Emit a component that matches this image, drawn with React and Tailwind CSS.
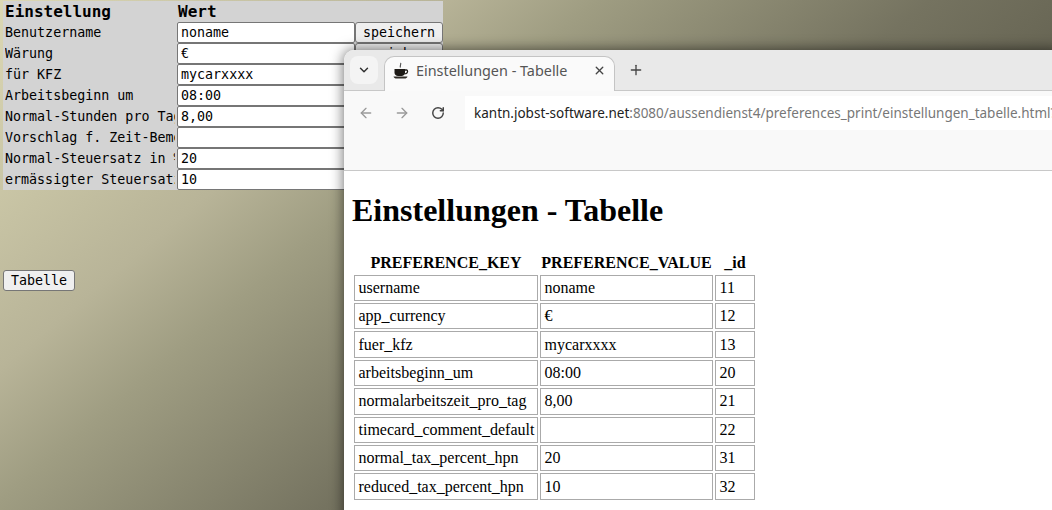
import { ArrowLeft, ArrowRight, ChevronDown, Plus, RotateCw, X } from "lucide-react";

const settings = [
	{ label: "Benutzername", value: "noname" },
	{ label: "Wärung", value: "€" },
	{ label: "für KFZ", value: "mycarxxxx" },
	{ label: "Arbeitsbeginn um", value: "08:00" },
	{ label: "Normal-Stunden pro Tag", value: "8,00" },
	{ label: "Vorschlag f. Zeit-Bemerkung", value: "" },
	{ label: "Normal-Steuersatz in %", value: "20" },
	{ label: "ermässigter Steuersatz in %", value: "10" },
];

const rows = [
	["username", "noname", 11],
	["app_currency", "€", 12],
	["fuer_kfz", "mycarxxxx", 13],
	["arbeitsbeginn_um", "08:00", 20],
	["normalarbeitszeit_pro_tag", "8,00", 21],
	["timecard_comment_default", "", 22],
	["normal_tax_percent_hpn", "20", 31],
	["reduced_tax_percent_hpn", "10", 32],
];

const CoffeeIcon = () => (
	<svg width="16" height="18" viewBox="0 0 16 18" className="shrink-0">
		<path d="M7.500 1c1 1.200-1 2.500 0 4.500" fill="none" stroke="#555" strokeWidth="1.200" />
		<path d="M1.500 7h10.500v3.500c0 2-1.500 3.500-3.500 3.500h-3.500c-2 0-3.500-1.500-3.500-3.500z" fill="#1c1915" />
		<path d="M12 8h1.500c1.500 0 1.500 3-.5 3.500l-1.500.5" fill="none" stroke="#1c1915" strokeWidth="1.300" />
		<path d="M.5 14.500h14c-.5 1.500-1.500 2-3 2h-8c-1.500 0-2.500-.5-3-2z" fill="#2e2a25" />
	</svg>
);

const BrowserWindow = () => (
	<div className="absolute left-[344px] top-[50px] h-[480px] w-[720px] overflow-hidden rounded-t-[10px] bg-white shadow-[0_0_14px_rgba(0,0,0,0.6)]">
		{/* Tab strip */}
		<div className="flex h-[40px] items-start bg-[#e9e9e9] pt-[6px] pl-[6px]">
			<div className="flex h-[28px] w-[28px] items-center justify-center rounded-lg bg-[#f4f4f4] text-[#333]">
				<ChevronDown size={14} strokeWidth={2.5} />
			</div>
			<div className="relative z-10 ml-[6px] flex h-[35px] w-[231px] items-center rounded-t-[10px] border border-b-0 border-[#c4c4c4] bg-[#fafafa] pb-[7px] pl-[8px] pr-[8px]">
				<CoffeeIcon />
				<span className="ml-[7px] flex-1 font-['Noto_Sans'] text-[14.4px] leading-[20px] whitespace-nowrap text-[#555]">Einstellungen - Tabelle</span>
				<X size={13} strokeWidth={2.5} className="text-[#444]" />
			</div>
			<Plus size={16} strokeWidth={2} className="ml-[13px] mt-[6px] text-[#444]" />
		</div>
		{/* Toolbar */}
		<div className="h-[81px] border-y border-[#c8c8c8] bg-[#f9f9f9]">
			<div className="flex h-[46px] items-start">
				<div className="mt-[5px] flex h-[34px] w-[121px] shrink-0 items-center pl-[14px]">
					<ArrowLeft size={16} className="text-[#9a9a9a]" />
					<ArrowRight size={16} className="ml-[20px] text-[#9a9a9a]" />
					<RotateCw size={14} strokeWidth={2.5} className="ml-[21px] text-[#444]" />
				</div>
				<div className="mt-[5px] flex h-[34px] flex-1 items-center overflow-hidden whitespace-nowrap bg-white pl-[9px] font-['Noto_Sans'] text-[13.5px]">
					<span className="text-[#222]">kantn.jobst-software.net</span>
					<span className="text-[#777]">:8080/aussendienst4/preferences_print/einstellungen_tabelle.html?</span>
				</div>
			</div>
		</div>
		{/* Page */}
		<div className="pl-[8px] font-['Liberation_Serif'] text-[16px] text-black">
			<h1 className="mt-[21px] mb-[21.7px] text-[32px] leading-[37px] font-bold">Einstellungen - Tabelle</h1>
			<table className="border-separate border-spacing-[2px]">
				<thead>
					<tr>
						<th className="h-[20px] w-[184px] p-0 leading-[20px]">PREFERENCE_KEY</th>
						<th className="h-[20px] w-[173px] p-0 leading-[20px]">PREFERENCE_VALUE</th>
						<th className="h-[20px] w-[40px] p-0 leading-[20px]">_id</th>
					</tr>
				</thead>
				<tbody>
					{rows.map((row) => (
						<tr key={row[2]}>
							{row.map((cell, i) => (
								<td key={i} className="h-[26.4px] border border-[#aaa] pl-[3.500px] pr-[2px] py-0">
									{cell}
								</td>
							))}
						</tr>
					))}
				</tbody>
			</table>
		</div>
	</div>
);

const App = () => {
	return (
		<div className="relative h-[510px] w-[1052px] overflow-hidden bg-[linear-gradient(140deg,#dcd8b4_0%,#b8b498_26.5%,#9f9d82_36%,#757360_56%,#6c6a58_63.4%,#403e30_100%)] pt-px pl-[3px] font-['DejaVu_Sans_Mono'] text-[13.33px] text-black">
			<div className="grid w-[440px] grid-cols-[174px_178px_88px] bg-[#d3d3d3]">
				<div className="h-[21px] pl-[2px] text-[16px] leading-[21px] font-bold">Einstellung</div>
				<div className="col-span-2 h-[21px] pl-px text-[16px] leading-[21px] font-bold">Wert</div>
				{settings.map((s) => (
					<div key={s.label} className="contents">
						<div className="pl-[2px]">
							<div className="h-[21px] w-[170px] overflow-hidden leading-[21px] whitespace-nowrap">{s.label}</div>
						</div>
						<input
							readOnly
							value={s.value}
							className="h-[21px] w-[178px] rounded-[2px] border border-[#767676] bg-white px-[3px] font-['DejaVu_Sans_Mono'] text-[13.33px] text-black"
						/>
						<button className="h-[21px] rounded-[3px] border border-[#767676] bg-[#efefef] text-center text-[13.33px]">speichern</button>
					</div>
				))}
			</div>
			<button className="mt-[80px] block h-[21px] w-[72px] rounded-[3px] border border-[#767676] bg-[#efefef] text-center text-[13.33px]">Tabelle</button>
			<BrowserWindow />
		</div>
	);
};

export default App;
